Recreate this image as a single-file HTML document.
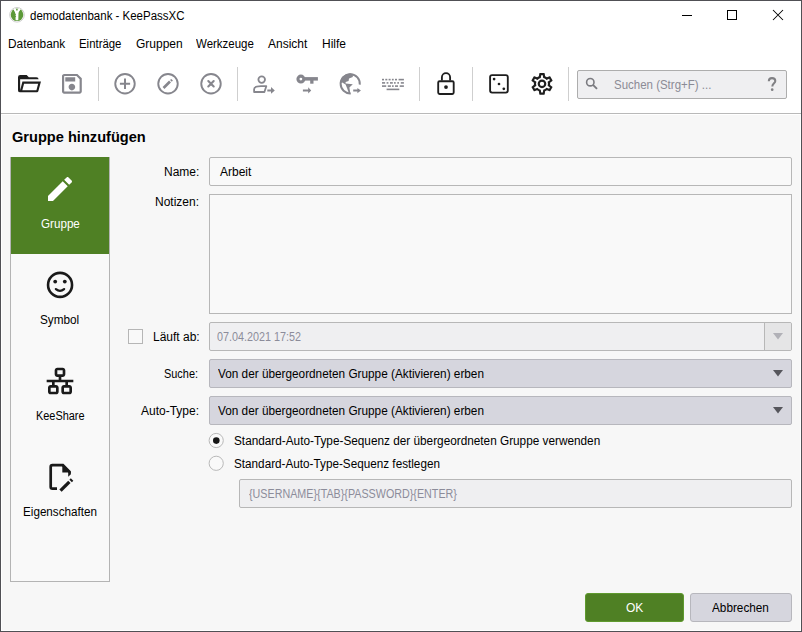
<!DOCTYPE html>
<html><head><meta charset="utf-8">
<style>
*{margin:0;padding:0;box-sizing:border-box}
html,body{width:802px;height:632px;overflow:hidden;background:#fff}
body{position:relative;font-family:"Liberation Sans",sans-serif;font-size:12px;color:#000}
.a{position:absolute}
.t{position:absolute;white-space:pre;line-height:12px;font-size:12px;transform-origin:0 0}
svg{position:absolute;overflow:visible}
</style></head><body>
<!-- window border -->
<div class="a" style="left:0;top:0;width:802px;height:632px;border:1px solid #505055"></div>
<!-- title bar -->
<svg style="left:0;top:0" width="30" height="30" viewBox="0 0 30 30">
 <circle cx="17" cy="14.8" r="7.3" fill="#fff" stroke="#c8c8c8" stroke-width="0.9"/>
 <circle cx="17" cy="14.8" r="6.3" fill="#5b9837"/>
 <path d="M13.6,8.7L20.4,8.7L19.9,10.6Q18.6,11.8 18.5,13.2L18.3,19.9Q17,20.6 15.6,19.9L15.5,17.2L16.2,16.4L15.4,15.5L16,14.6L15.3,13.4Q15.1,11.7 14.1,10.7Z" fill="#fff"/>
 <circle cx="16.9" cy="9.7" r="0.85" fill="#5b9837"/>
</svg>
<div class="t" style="left:30px;top:10px;transform:scaleX(0.957)">demodatenbank - KeePassXC</div>
<div class="a" style="left:682px;top:15px;width:10px;height:1px;background:#000"></div>
<div class="a" style="left:727px;top:10px;width:10px;height:10px;border:1px solid #000"></div>
<svg style="left:773px;top:10px" width="10" height="10" viewBox="0 0 10 10"><path d="M0 0L10 10M10 0L0 10" stroke="#000" stroke-width="1.05"/></svg>
<!-- menu -->
<div class="t" style="left:8px;top:38px;transform:scaleX(0.986)">Datenbank</div>
<div class="t" style="left:79px;top:38px;transform:scaleX(0.95)">Einträge</div>
<div class="t" style="left:136px;top:38px">Gruppen</div>
<div class="t" style="left:196px;top:38px;transform:scaleX(0.957)">Werkzeuge</div>
<div class="t" style="left:268px;top:38px">Ansicht</div>
<div class="t" style="left:322px;top:38px">Hilfe</div>
<!-- toolbar -->
<div id="toolbar"></div>
<div class="a" style="left:577px;top:70px;width:210px;height:29px;border:1px solid #adadad;border-radius:2px;background:#efeff1"></div>
<svg style="left:0;top:0" width="802" height="120" viewBox="0 0 802 120">
 <g fill="#86868d" stroke="none">
  <!-- separators -->
  <rect x="98" y="67" width="1" height="34" fill="#cfcfcf"/>
  <rect x="237" y="67" width="1" height="34" fill="#cfcfcf"/>
  <rect x="419" y="67" width="1" height="34" fill="#cfcfcf"/>
  <rect x="472" y="67" width="1" height="34" fill="#cfcfcf"/>
  <rect x="568" y="67" width="1" height="34" fill="#cfcfcf"/>
 </g>
 <!-- folder open -->
 <path transform="translate(15.83,70.67) scale(1.0833)" fill="#1e1e1e" d="M6.1,10L4,18V8H21A2,2 0 0,0 19,6H12L10,4H4A2,2 0 0,0 2,6V18A2,2 0 0,0 4,20H19C19.9,20 20.7,19.4 20.9,18.5L23.2,10H6.1M19,18H6L7.6,12H20.6L19,18Z"/>
 <!-- save -->
 <path transform="translate(58.7,70.6) scale(1.1)" fill="#86868d" d="M17 3H5C3.89 3 3 3.9 3 5V19C3 20.1 3.89 21 5 21H19C20.1 21 21 20.1 21 19V7L17 3M19 19H5V5H16.17L19 7.83V19M12 12C10.34 12 9 13.34 9 15S10.34 18 12 18 15 16.66 15 15 13.66 12 12 12M6 6H15V10H6V6Z"/>
 <g fill="none" stroke="#86868d" stroke-width="1.9">
  <!-- plus circle -->
  <circle cx="125" cy="83.74" r="9.74"/>
  <path d="M125 78.6V88.9M119.9 83.74H130.1" stroke-width="2"/>
  <!-- pencil circle -->
  <circle cx="168" cy="83.74" r="9.74"/>
  <path d="M164.46,88.96L162.55,87.05L169.05,80.55L170.96,82.46Z" fill="#86868d" stroke="none"/>
  <path d="M172.91,80.58L171.22,78.88L170.09,80.02L171.78,81.72Z" fill="#86868d" stroke="none"/>
  <!-- x circle -->
  <circle cx="211" cy="83.74" r="9.74"/>
  <path d="M208.3 81.1L213.7 86.4M213.7 81.1L208.3 86.4" stroke-width="2.1" stroke-linecap="round"/>
  <!-- user -->
  <circle cx="261.7" cy="79.6" r="3.3" stroke-width="1.8"/>
  <path d="M254.1 92V89.2C254.1 87 257.5 86.2 261 86.2H266.3L264.4 92Z" stroke-width="1.8" stroke-linejoin="round"/>
  <!-- magnifier -->
  <circle cx="590.3" cy="82.2" r="3.7" stroke-width="1.6" stroke="#7b7b80"/>
  <path d="M593 84.9L597 88.9" stroke-width="1.9" stroke="#7b7b80"/>
  <!-- help -->
  <path d="M768.8 81.3C768.8 79.1 770.3 78.1 772 78.1C773.9 78.1 775.3 79.3 775.3 81C775.3 83.1 772.3 83.6 772.3 86.5" stroke-width="2.05" stroke="#808084"/>
 </g>
 <circle cx="772.2" cy="89.7" r="1.35" fill="#808084"/>
 <g fill="#86868d">
  <!-- arrows -->
  <path d="M267.3 89.4H271V87.1L274.8 90.4L271 93.7V91.4H267.3Z"/>
  <path d="M302.9 89.4H308.2V87.2L311.2 90.4L308.2 93.6V91.4H302.9Z"/>
  <path d="M353.2 89.6H357.4V87.9L360.9 90.6L357.4 93.3V91.5H353.2Z"/>
  <!-- key -->
  <circle cx="300.9" cy="79.1" r="2.95" fill="none" stroke="#86868d" stroke-width="3.1"/>
  <rect x="304.5" y="77.1" width="13.4" height="3.5"/>
  <rect x="310.2" y="79" width="3.3" height="4.7"/>
  <!-- keyboard -->
  <rect x="382" y="78.8" width="2" height="1.6"/><rect x="385.3" y="78.8" width="2" height="1.6"/><rect x="388.6" y="78.8" width="2" height="1.6"/><rect x="391.9" y="78.8" width="1.8" height="1.6"/><rect x="395" y="78.8" width="2" height="1.6"/><rect x="398.6" y="78.8" width="5.3" height="1.6"/>
  <rect x="382" y="82.1" width="3.1" height="1.6"/><rect x="386.6" y="82.1" width="1.8" height="1.6"/><rect x="390" y="82.1" width="2.8" height="1.6"/><rect x="394" y="82.1" width="1.7" height="1.6"/><rect x="397.3" y="82.1" width="1.7" height="1.6"/><rect x="400.8" y="82.1" width="3.1" height="1.6"/>
  <rect x="382" y="85.3" width="4.2" height="1.6"/><rect x="387.8" y="85.3" width="3.1" height="1.6"/><rect x="392" y="85.3" width="1.7" height="1.6"/><rect x="395" y="85.3" width="3" height="1.6"/><rect x="399.7" y="85.3" width="4.2" height="1.6"/>
  <rect x="386.6" y="88.6" width="12.7" height="1.6"/>
 </g>
 <!-- globe -->
 <path d="M359.8 84.6A9.6 9.6 0 1 0 350.65 93.4" fill="none" stroke="#86868d" stroke-width="2"/>
 <path fill="#86868d" d="M340.3 81.1L342 77L346 74.3L350 73.3L352.8 74.3L352.8 76.9L349 78.5L348.6 80.9L345.6 82.1L345.6 83.6L352.8 84.2L349.4 87.6L349.8 89.9L350.5 94L348.6 92.5L347.1 88.3L345.6 84.5L340.9 81.7Z"/>
 <g fill="none" stroke="#1e1e1e" stroke-width="1.85">
  <!-- lock -->
  <path d="M441.9 80.6V77.2A4.1 4.1 0 0 1 450.1 77.2V80.6"/>
  <rect x="438.2" y="81.2" width="15.5" height="12.8" rx="1.4"/>
  <!-- dice -->
  <rect x="490.1" y="75.1" width="17.7" height="17.5" rx="2"/>
 </g>
 <g fill="#1e1e1e">
  <circle cx="446" cy="87.1" r="1.9"/>
  <circle cx="494.1" cy="79.1" r="1.35"/><circle cx="499" cy="84" r="1.35"/><circle cx="503.8" cy="88.8" r="1.35"/>
  <path transform="translate(529,70.8) scale(1.0833)" d="M12,8A4,4 0 0,1 16,12A4,4 0 0,1 12,16A4,4 0 0,1 8,12A4,4 0 0,1 12,8M12,10A2,2 0 0,0 10,12A2,2 0 0,0 12,14A2,2 0 0,0 14,12A2,2 0 0,0 12,10M10,22C9.75,22 9.54,21.82 9.5,21.58L9.13,18.93C8.5,18.68 7.96,18.34 7.44,17.94L4.95,18.95C4.73,19.03 4.46,18.95 4.34,18.73L2.34,15.27C2.21,15.05 2.27,14.78 2.46,14.63L4.57,12.97L4.5,12L4.57,11L2.46,9.37C2.27,9.22 2.21,8.95 2.34,8.73L4.34,5.27C4.46,5.05 4.73,4.96 4.95,5.05L7.44,6.05C7.96,5.66 8.5,5.32 9.13,5.07L9.5,2.42C9.54,2.18 9.75,2 10,2H14C14.25,2 14.46,2.18 14.5,2.42L14.87,5.07C15.5,5.32 16.04,5.66 16.56,6.05L19.05,5.05C19.27,4.96 19.54,5.05 19.66,5.27L21.66,8.73C21.79,8.95 21.730,9.22 21.54,9.37L19.43,11L19.5,12L19.43,13L21.54,14.63C21.73,14.78 21.79,15.05 21.66,15.27L19.66,18.73C19.54,18.95 19.27,19.04 19.05,18.950L16.56,17.95C16.04,18.34 15.5,18.68 14.87,18.93L14.5,21.58C14.46,21.82 14.25,22 14,22H10M11.25,4L10.88,6.61C9.68,6.86 8.620,7.5 7.85,8.39L5.44,7.35L4.69,8.65L6.8,10.2C6.4,11.37 6.4,12.64 6.8,13.8L4.68,15.36L5.43,16.66L7.86,15.62C8.63,16.5 9.68,17.14 10.87,17.38L11.24,20H12.76L13.13,17.39C14.32,17.14 15.37,16.5 16.14,15.62L18.57,16.66L19.32,15.36L17.2,13.81C17.6,12.64 17.6,11.37 17.2,10.2L19.31,8.65L18.56,7.35L16.15,8.39C15.38,7.5 14.32,6.86 13.12,6.62L12.75,4H11.25Z"/>
 </g>
</svg>
<div class="t" style="left:614px;top:79px;color:#8b8b95;transform:scaleX(0.957)">Suchen (Strg+F) ...</div>

<div class="a" style="left:1px;top:113px;width:800px;height:1px;background:#b9b9b9"></div>
<!-- dialog -->
<div class="a" style="left:2px;top:115px;width:798px;height:515px;background:#f7f7f7"></div>
<div class="t" style="left:12px;top:130px;font-size:14.6px;line-height:14px;font-weight:bold">Gruppe hinzufügen</div>
<!-- sidebar -->
<div class="a" style="left:10px;top:157px;width:100px;height:425px;border:1px solid #b4b4b4;background:#f9f9f9"></div>
<div class="a" style="left:11px;top:157px;width:98px;height:97px;background:#4f8024"></div>
<svg style="left:0;top:150px" width="120" height="360" viewBox="0 150 120 360">
 <path transform="translate(44,173) scale(1.33333)" fill="#fff" d="M20.71,7.04C21.1,6.65 21.1,6 20.71,5.63L18.37,3.29C18,2.9 17.35,2.9 16.96,3.29L15.12,5.12L18.87,8.87M3,17.25V21H6.75L17.81,9.93L14.06,6.18L3,17.25Z"/>
 <circle cx="60.05" cy="284.9" r="12" fill="none" stroke="#1a1a1a" stroke-width="2.6"/>
 <circle cx="55.2" cy="281.6" r="1.9" fill="#1a1a1a"/><circle cx="64.8" cy="281.6" r="1.9" fill="#1a1a1a"/>
 <path d="M55.9,289.1 Q60,292.7 64.1,289.1" fill="none" stroke="#1a1a1a" stroke-width="2.3" stroke-linecap="round"/>
 <path transform="translate(44,365) scale(1.33333)" fill="#1a1a1a" d="M10,2C8.89,2 8,2.89 8,4V7C8,8.11 8.89,9 10,9H11V11H2V13H6V15H5C3.89,15 3,15.89 3,17V20C3,21.11 3.89,22 5,22H9C10.11,22 11,21.11 11,20V17C11,15.890 10.11,15 9,15H8V13H16V15H15C13.89,15 13,15.89 13,17V20C13,21.11 13.89,22 15,22H19C20.11,22 21,21.11 21,20V17C21,15.89 20.11,15 19,15H18V13H22V11H13V9H14C15.11,9 16,8.11 16,7V4C16,2.89 15.11,2 14,2H10M10,4H14V7H10V4M5,17H9V20H5V17M15,17H19V20H15V17Z"/>
 <path d="M57,488.6H52.4Q50.7,488.6 50.7,486.9V466.9Q50.7,465.2 52.4,465.2H62.9L69.5,471.8V472.5" fill="none" stroke="#1a1a1a" stroke-width="2.7" stroke-linejoin="miter"/>
 <path d="M62.3,464.2L70.8,472.5H62.3Z" fill="#1a1a1a"/><path d="M68.15,471.8H70.85V474.2L68.2,476.8Z" fill="#1a1a1a"/>
 <path d="M61.67,491.87L59.33,489.53L68.2,480.7L70.54,483.04Z" fill="#1a1a1a"/>
 <path d="M73.29,480.73L70.82,478.26L69.41,479.67L71.88,482.14Z" fill="#1a1a1a"/>
</svg>
<div class="t" style="left:41px;top:218px;color:#fff;transform:scaleX(0.97)">Gruppe</div>
<div class="t" style="left:40px;top:314px;transform:scaleX(0.98)">Symbol</div>
<div class="t" style="left:36px;top:410px;transform:scaleX(0.91)">KeeShare</div>
<div class="t" style="left:23px;top:506px;transform:scaleX(0.973)">Eigenschaften</div>
<!-- labels -->
<div class="t" style="left:164px;top:166px">Name:</div>
<div class="t" style="left:155px;top:196px">Notizen:</div>
<div class="t" style="left:153px;top:331px">Läuft ab:</div>
<div class="t" style="left:164px;top:368px;transform:scaleX(0.91)">Suche:</div>
<div class="t" style="left:141px;top:405px">Auto-Type:</div>
<!-- fields -->
<div class="a" style="left:209px;top:157px;width:583px;height:29px;border:1px solid #b7b7b7;border-radius:2px;background:#f9f9f9"></div>
<div class="t" style="left:220px;top:166px">Arbeit</div>
<div class="a" style="left:209px;top:194px;width:583px;height:120px;border:1px solid #b7b7b7;background:#f9f9f9"></div>
<div class="a" style="left:128px;top:329px;width:15px;height:15px;border:1px solid #b6b6b6;background:#f9f9f9"></div>
<div class="a" style="left:209px;top:322px;width:583px;height:29px;border:1px solid #b7b7b7;border-radius:2px;background:#efeff1"></div>
<div class="a" style="left:764px;top:323px;width:1px;height:27px;background:#b7b7b7"></div>
<div class="a" style="left:765px;top:323px;width:26px;height:27px;background:#e5e5e6;border-radius:0 1.5px 1.5px 0"></div>
<svg style="left:773px;top:333px" width="10" height="7" viewBox="0 0 10 7"><path d="M0 0H10L5 6.5Z" fill="#b1b1b7"/></svg>
<div class="t" style="left:217px;top:331px;color:#8c8c9a;transform:scaleX(0.898)">07.04.2021 17:52</div>
<div class="a" style="left:209px;top:359px;width:583px;height:29px;border:1px solid #b7b7bd;border-radius:2px;background:#d6d6de"></div>
<div class="t" style="left:218px;top:368px;transform:scaleX(0.982)">Von der übergeordneten Gruppe (Aktivieren) erben</div>
<svg style="left:773px;top:370px" width="10" height="7" viewBox="0 0 10 7"><path d="M0 0H10L5 6.5Z" fill="#56565c"/></svg>
<div class="a" style="left:209px;top:396px;width:583px;height:29px;border:1px solid #b7b7bd;border-radius:2px;background:#d6d6de"></div>
<div class="t" style="left:218px;top:405px;transform:scaleX(0.982)">Von der übergeordneten Gruppe (Aktivieren) erben</div>
<svg style="left:773px;top:407px" width="10" height="7" viewBox="0 0 10 7"><path d="M0 0H10L5 6.5Z" fill="#56565c"/></svg>
<!-- radios -->
<svg style="left:208px;top:433px" width="16" height="16" viewBox="0 0 16 16"><circle cx="8.2" cy="7.5" r="7.1" fill="#f9f9f9" stroke="#b9b9b9"/><circle cx="8.3" cy="7.6" r="3.3" fill="#161616"/></svg>
<div class="t" style="left:234px;top:435px;transform:scaleX(0.982)">Standard-Auto-Type-Sequenz der übergeordneten Gruppe verwenden</div>
<svg style="left:208px;top:456px" width="16" height="16" viewBox="0 0 16 16"><circle cx="8.2" cy="7.3" r="7.1" fill="#f9f9f9" stroke="#b9b9b9"/></svg>
<div class="t" style="left:234px;top:458px;transform:scaleX(0.977)">Standard-Auto-Type-Sequenz festlegen</div>
<div class="a" style="left:239px;top:479px;width:553px;height:29px;border:1px solid #b7b7b7;border-radius:2px;background:#efeff1"></div>
<div class="t" style="left:249px;top:488px;color:#8c8c9a;transform:scaleX(0.895)">{USERNAME}{TAB}{PASSWORD}{ENTER}</div>
<!-- buttons -->
<div class="a" style="left:585px;top:593px;width:99px;height:29px;border:1px solid #5f9a2e;border-radius:3px;background:#4f8024"></div>
<div class="t" style="left:626px;top:602px;color:#fff">OK</div>
<div class="a" style="left:690px;top:593px;width:102px;height:29px;border:1px solid #b7b7bd;border-radius:3px;background:#d6d6de"></div>
<div class="t" style="left:712px;top:602px;transform:scaleX(0.98)">Abbrechen</div>
</body></html>
